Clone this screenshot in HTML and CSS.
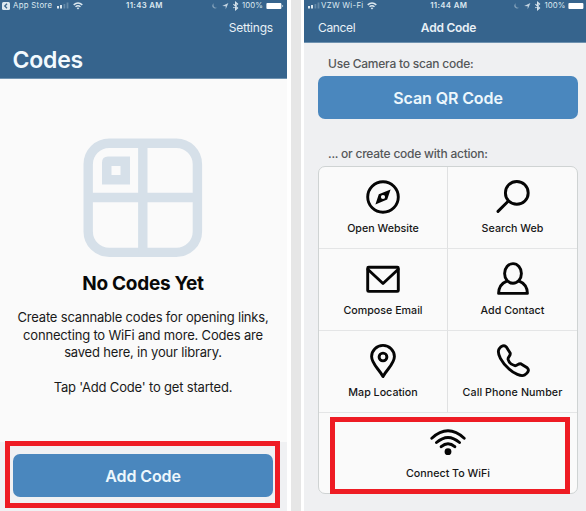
FILE: index.html
```html
<!DOCTYPE html>
<html lang="en">
<head>
<meta charset="utf-8">
<title>Codes</title>
<link rel="stylesheet" href="styles.css">
</head>
<body>
<svg class="defs" width="0" height="0">
  <symbol id="wifi-small" viewBox="0 0 10 8"><path d="M.7 2.9Q5-.9 9.3 2.9M2.5 4.8Q5 2.7 7.5 4.8" fill="none" stroke="currentColor" stroke-width="1.5"/><path d="M3.6 6Q5 4.9 6.4 6L5 7.6z" fill="currentColor"/></symbol>
  <symbol id="signal" viewBox="0 0 12 7"><path d="M0 4h2v2.5H0zM3 3h2v3.5H3z" fill="currentColor"/><path d="M6.5 2h1.8v4.5H6.5zM9.6.5h1.8v6H9.6z" fill="currentColor" opacity=".28"/></symbol>
  <symbol id="indicators" viewBox="0 0 28 10"><path d="M3 2.2A2.8 2.8 0 1 0 6 6.8 3 3 0 0 1 3 2.2z" fill="currentColor" opacity=".45"/><path d="M11.2 5 17.4 2 14.7 8.2V5.2z" fill="currentColor" opacity=".85"/><path d="M22.4 3.2 26.6 7 24.6 8.7V1.3l2 1.8-4.2 3.8" fill="none" stroke="currentColor" stroke-width="1.1"/></symbol>
</svg>
<main class="stage">
  <section class="phone library">
    <header class="header library-header">
      <div class="status">
        <svg class="back" viewBox="0 0 8 8"><rect width="8" height="8" rx="1.5" fill="currentColor"/><path d="M5 1.8 2.8 4 5 6.2" fill="none" stroke="#38658d" stroke-width="1.3"/></svg>
        <span class="carrier">App Store</span>
        <svg class="signal"><use href="#signal"/></svg>
        <svg class="wifi-small"><use href="#wifi-small"/></svg>
        <span class="clock">11:43 AM</span>
        <svg class="indicators"><use href="#indicators"/></svg>
        <span class="percent">100%</span>
        <svg class="battery" viewBox="0 0 18 8"><rect x=".4" y=".9" width="15" height="6.2" rx="1" fill="currentColor"/><path d="M16.6 3v2" stroke="currentColor" opacity=".6"/></svg>
      </div>
      <span class="settings">Settings</span>
      <h1>Codes</h1>
    </header>
    <div class="empty">
      <svg class="codes-logo" viewBox="0 0 120 120" fill="none" stroke="#d6e0e9" stroke-width="9.4"><rect x="5.2" y="5.2" width="109.2" height="109.2" rx="21"/><path d="M59.8 5v110M5 59.5h110"/><path fill="#d6e0e9" stroke="none" fill-rule="evenodd" d="M25 18.5h22v28H19v-22q0-6 6-6zM28.5 28v9h9v-9z"/></svg>
      <h2>No Codes Yet</h2>
      <p>Create scannable codes for opening links,<br>connecting to WiFi and more. Codes are<br>saved here, in your library.</p>
      <p class="hint">Tap 'Add Code' to get started.</p>
    </div>
    <footer><div class="button">Add Code</div></footer>
    <div class="mark mark-add"></div>
  </section>
  <div class="gutter"></div>
  <section class="phone create">
    <header class="header create-header">
      <div class="status">
        <svg class="signal"><use href="#signal"/></svg>
        <span class="carrier">VZW Wi-Fi</span>
        <svg class="wifi-small"><use href="#wifi-small"/></svg>
        <span class="clock">11:44 AM</span>
        <svg class="indicators"><use href="#indicators"/></svg>
        <span class="percent">100%</span>
        <svg class="battery" viewBox="0 0 18 8"><rect x=".4" y=".9" width="15" height="6.2" rx="1" fill="currentColor"/></svg>
      </div>
      <nav><span class="cancel">Cancel</span><strong>Add Code</strong></nav>
    </header>
    <div class="label scan-label">Use Camera to scan code:</div>
    <div class="button">Scan QR Code</div>
    <div class="label action-label">... or create code with action:</div>
    <div class="actions">
      <div class="action"><svg viewBox="0 0 36 36"><circle cx="18" cy="18" r="15.3"/><path class="solid" fill-rule="evenodd" d="M25.6 10.5 22.2 20.4 10.4 25.6 13.8 15.2zM18 15.9a2.1 2.1 0 1 0 0 4.2 2.1 2.1 0 1 0 0-4.2z"/></svg><span>Open Website</span></div>
      <div class="action"><svg viewBox="0 0 36 36"><circle cx="21.8" cy="13.9" r="11.4"/><path d="M13.4 22 3 32.4"/></svg><span>Search Web</span></div>
      <div class="action"><svg viewBox="0 0 36 36"><rect x="2.7" y="6.2" width="30.6" height="24.2" rx="1"/><path d="M3 8.5 18 22.5 33 8.5"/></svg><span>Compose Email</span></div>
      <div class="action"><svg viewBox="0 0 36 36"><ellipse cx="18" cy="12.4" rx="8.4" ry="9.8"/><path d="M11.8 20.2C6 22.5 3.8 26 3.6 32.4H32.4C32.2 26 30 22.5 24.2 20.2"/></svg><span>Add Contact</span></div>
      <div class="action"><svg viewBox="0 0 36 36"><path d="M18 33.5C14 26 6.6 21 6.6 13.6a11.4 11.2 0 0 1 22.8 0C29.4 21 22 26 18 33.5z"/><circle cx="18" cy="14" r="3.9"/></svg><span>Map Location</span></div>
      <div class="action"><svg viewBox="0 0 36 36"><path d="M4.2 5.7C6 3 9.4 1.6 11.2 3.8L15 9.7C16.5 12.5 12.5 13.8 13.1 16.4 13.9 19.2 16.9 22 19.8 22.7 22.3 23.2 23.5 19.7 26.1 20.9L32.2 24.7C34.9 27.2 32.5 30.3 29.6 32 26.2 34 19 30.6 13.8 25.8 7.2 19.8 1.2 10.6 4.2 5.7z"/></svg><span class="t-phone">Call Phone Number</span></div>
      <div class="action wide"><svg viewBox="0 0 36 36"><path d="M1.8 14.2Q18-.6 34.2 14.2M6.5 18.5Q18 8.3 29.5 18.5M11.2 22.7Q18 16.6 24.8 22.7"/><circle class="solid" cx="18" cy="27.7" r="3.4"/></svg><span>Connect To WiFi</span></div>
    </div>
    <div class="mark mark-wifi"></div>
  </section>
</main>
</body>
</html>
```

FILE: styles.css
```css
* { box-sizing: border-box; }
body { margin: 0; font-family: Inter, "Liberation Sans", sans-serif; background: #fff; overflow: hidden; }
h1, h2, p { margin: 0; }
svg { display: block; flex: none; }
.defs { position: absolute; }
.stage { display: grid; grid-template-columns: 287px 17px 282px; width: 586px; height: 511px; }
.phone { position: relative; height: 511px; overflow: hidden; display: flex; flex-direction: column; white-space: nowrap; }
.library { background: #fafafa; }
.create { background: #eff0f2; }
.gutter { margin: 0 3px 0 4px; background: #e6e6e6; }
.header { background: #36648d; color: #e8f0f6; flex: none; border-bottom: 1px solid #6f92b0; }
.library-header { height: 79px; }
.create-header { height: 43px; }
.status { display: flex; align-items: center; height: 11px; font-size: 7.8px; line-height: 11px; color: #dce8f0; }
.back { width: 8px; height: 8px; margin-left: 2px; }
.carrier { width: 41px; margin-left: 3px; letter-spacing: .3px; }
.signal { width: 12px; height: 7px; margin-left: 3px; }
.wifi-small { width: 10px; height: 8px; margin-left: 4px; }
.clock { width: 40px; margin-left: 43px; font-weight: 600; letter-spacing: .35px; }
.indicators { width: 28px; height: 10px; margin-left: 45px; }
.percent { width: 22px; margin-left: 3px; letter-spacing: .1px; }
.battery { width: 18px; height: 8px; margin-left: 2px; color: #fff; }
.create .signal { margin-left: 4px; }
.create .carrier { width: 44px; margin-left: 1px; }
.create .wifi-small { margin-left: 3px; }
.create .clock { margin-left: 53px; }
.create .indicators { margin-left: 44px; }
.settings { display: block; text-align: right; padding-right: 14px; margin-top: 9px; font-size: 12px; line-height: 16px; letter-spacing: -.2px; }
h1 { margin: 10px 0 0 12.5px; font-size: 23px; line-height: 28px; font-weight: 600; letter-spacing: -.2px; color: #f3fafe; }
.empty { display: flex; flex-direction: column; align-items: center; flex: 1; padding: 58.5px 1px 0 0; color: #191919; }
.codes-logo { width: 120px; height: 120px; }
h2 { margin-top: 13.5px; font-size: 19px; line-height: 25px; font-weight: 700; letter-spacing: -.3px; color: #080808; }
.empty p { margin-top: 13px; font-size: 13px; line-height: 17.5px; text-align: center; letter-spacing: -.18px; }
.empty .hint { margin-top: 17px; }
footer { height: 69px; padding-top: 12px; background: #f0f1f3; flex: none; }
.button { height: 43px; flex: none; margin: 0 14px 0 13px; border-radius: 7px; background: #4a87be; color: #edf7fc; font-size: 16px; line-height: 44px; font-weight: 600; text-align: center; letter-spacing: -.1px; }
.create .button { width: 260px; margin: 0 0 0 14px; }
nav { display: grid; grid-template-columns: 1fr auto 1fr; padding: 8px 0 0 14px; font-size: 12px; line-height: 17px; letter-spacing: -.25px; }
.cancel { letter-spacing: -.35px; }
nav strong { margin-left: -7px; font-weight: 600; }
.label { padding-left: 24px; color: #555759; font-size: 12px; font-weight: 500; line-height: 16px; letter-spacing: -.23px; flex: none; }
.scan-label { margin: 13px 0 4px; }
.action-label { margin: 27px 0 4px; }
.actions { display: grid; grid-template-columns: 1fr 1fr; grid-template-rows: 82px 82px 82px 80px; flex: none; width: 260px; height: 328px; margin-left: 14px; border: 1px solid #cfd3d3; border-radius: 7px; background: #fafafa; }
.action { display: flex; flex-direction: column; align-items: center; padding-top: 12px; border-bottom: 1px solid #e4e5e6; color: #161616; font-size: 10.7px; line-height: 15px; font-weight: 500; }
.action:nth-child(odd):not(.wide) { border-right: 1px solid #e0e1e2; }
.wide { grid-column: 1 / 3; border-bottom: 0; padding-top: 11px; }
.action svg { width: 36px; height: 36px; margin-bottom: 6px; fill: none; stroke: #050505; stroke-width: 2.9; stroke-linecap: round; stroke-linejoin: round; }
.action svg .solid { fill: #050505; stroke: none; }
.t-phone { letter-spacing: .08px; }
.mark { position: absolute; border: 5px solid #ee1c24; }
.mark-add { left: 5px; top: 441px; width: 275px; height: 67px; }
.mark-wifi { left: 26px; top: 417px; width: 240px; height: 77px; }
```
